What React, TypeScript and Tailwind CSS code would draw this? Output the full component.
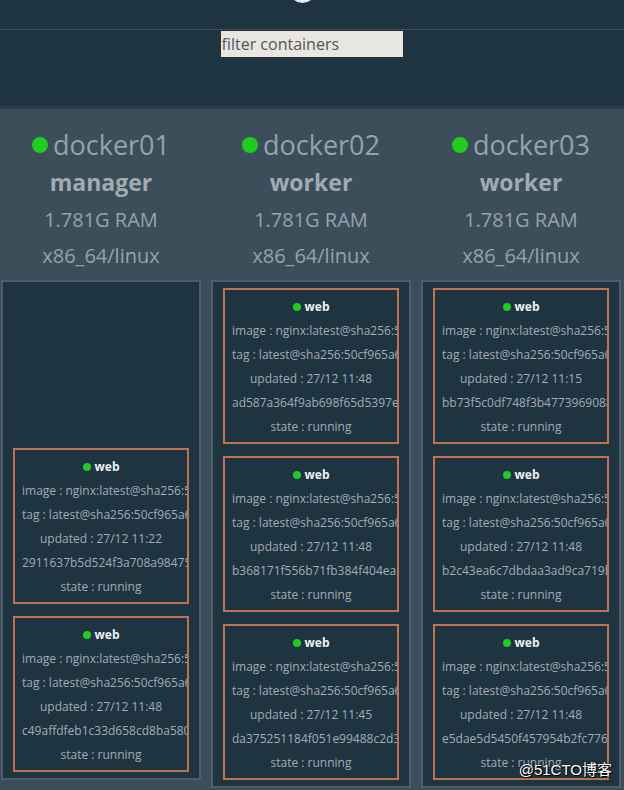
import React from "react";

type Task = { image: string; tag: string; updated: string; id: string };
type Node = { name: string; role: string; ram: string; arch: string; tasks: Task[] };

const img = "image : nginx:latest@sha256:50cf965a6e08ec5784009d0fccb380fc479826b6e0e65684d9879170a9df8566";
const tag = "tag : latest@sha256:50cf965a6e08ec5784009d0fccb380fc479826b6e0e65684d9879170a9df8566";

const nodes: Node[] = [
  {
    name: "docker01",
    role: "manager",
    ram: "1.781G RAM",
    arch: "x86_64/linux",
    tasks: [
      { image: img, tag, updated: "27/12 11:22", id: "2911637b5d524f3a708a98475c3e" },
      { image: img, tag, updated: "27/12 11:48", id: "c49affdfeb1c33d658cd8ba580f1" },
    ],
  },
  {
    name: "docker02",
    role: "worker",
    ram: "1.781G RAM",
    arch: "x86_64/linux",
    tasks: [
      { image: img, tag, updated: "27/12 11:48", id: "ad587a364f9ab698f65d5397e1a2" },
      { image: img, tag, updated: "27/12 11:48", id: "b368171f556b71fb384f404ea1c2" },
      { image: img, tag, updated: "27/12 11:45", id: "da375251184f051e99488c2d3b11" },
    ],
  },
  {
    name: "docker03",
    role: "worker",
    ram: "1.781G RAM",
    arch: "x86_64/linux",
    tasks: [
      { image: img, tag, updated: "27/12 11:15", id: "bb73f5c0df748f3b47739690882a" },
      { image: img, tag, updated: "27/12 11:48", id: "b2c43ea6c7dbdaa3ad9ca719b0e1" },
      { image: img, tag, updated: "27/12 11:48", id: "e5dae5d5450f457954b2fc77601c" },
    ],
  },
];

function TaskCard({ task }: { task: Task }) {
  return (
    <div className="w-[176px] border-2 border-[#c0714f] bg-[#1f3441] px-[7px] pt-[5px] pb-[3px] overflow-hidden text-center whitespace-nowrap text-[12px] leading-[24px] text-[#a2adb3]">
      <div className="flex items-center justify-center gap-[4px] font-bold text-[#f0f2f3]">
        <span className="inline-block size-[8px] rounded-full bg-[#1fcc1f]" />
        web
      </div>
      <div>{task.image}</div>
      <div>{task.tag}</div>
      <div>updated : {task.updated}</div>
      <div>{task.id}</div>
      <div>state : running</div>
    </div>
  );
}

function NodeColumn({ node, first }: { node: Node; first: boolean }) {
  return (
    <div className="w-[200px] flex flex-col items-center">
      <div className="flex flex-col items-center text-[#95a3ab] leading-[36px]">
        <div className="flex items-center gap-[5px] text-[27px]">
          <span className="inline-block size-[16px] rounded-full bg-[#1fcc1f]" />
          {node.name}
        </div>
        <div className="mt-[1px] text-[23px] font-bold text-[#a0acb2]">{node.role}</div>
        <div className="mt-[2px] text-[20px]">{node.ram}</div>
        <div className="text-[20px]">{node.arch}</div>
      </div>
      <div
        className={
          first
            ? "mt-[6px] w-[200px] h-[500px] border-2 border-[#4b5e6a] bg-[#1f3441] flex flex-col items-center justify-end gap-[12px] pb-[6px]"
            : "mt-[6px] w-[200px] border-2 border-[#4b5e6a] bg-[#1f3441] flex flex-col items-center gap-[12px] pt-[6px] pb-[6px]"
        }
      >
        {node.tasks.map((t, i) => (
          <TaskCard key={i} task={t} />
        ))}
      </div>
    </div>
  );
}

export default function App() {
  return (
    <div
      className="relative w-[624px] h-[790px] overflow-hidden bg-[#3c4e5a]"
      style={{ fontFamily: '"Open Sans", "Noto Sans", sans-serif' }}
    >
      <div className="bg-[#1f3441] border-b-[3px] border-[#2a3e4b]">
        <div className="h-[30px] border-b border-[#36505f] flex justify-center overflow-hidden">
          <div className="ml-[-20px] mt-[-24px] size-[27px] rounded-full border-[3px] border-[#e9ecee]" />
        </div>
        <div className="h-[76px] flex justify-center">
          <input
            readOnly
            value="filter containers"
            className="ml-[-1px] w-[184px] h-[28px] bg-[#e8e6e1] border border-[#2b2b2b] px-[1px] text-[16px] text-[#555] outline-none"
          />
        </div>
      </div>
      <div className="flex gap-[10px] pl-[1px] pt-[18px]">
        {nodes.map((n, i) => (
          <NodeColumn key={n.name} node={n} first={i === 0} />
        ))}
      </div>
      <div
        className="absolute right-[12px] bottom-[9px] text-[15px] text-white"
        style={{ fontFamily: '"Liberation Sans", "Noto Sans CJK SC", sans-serif', textShadow: "0 0 2px #000, 1px 1px 1px #000" }}
      >
        @51CTO博客
      </div>
    </div>
  );
}
